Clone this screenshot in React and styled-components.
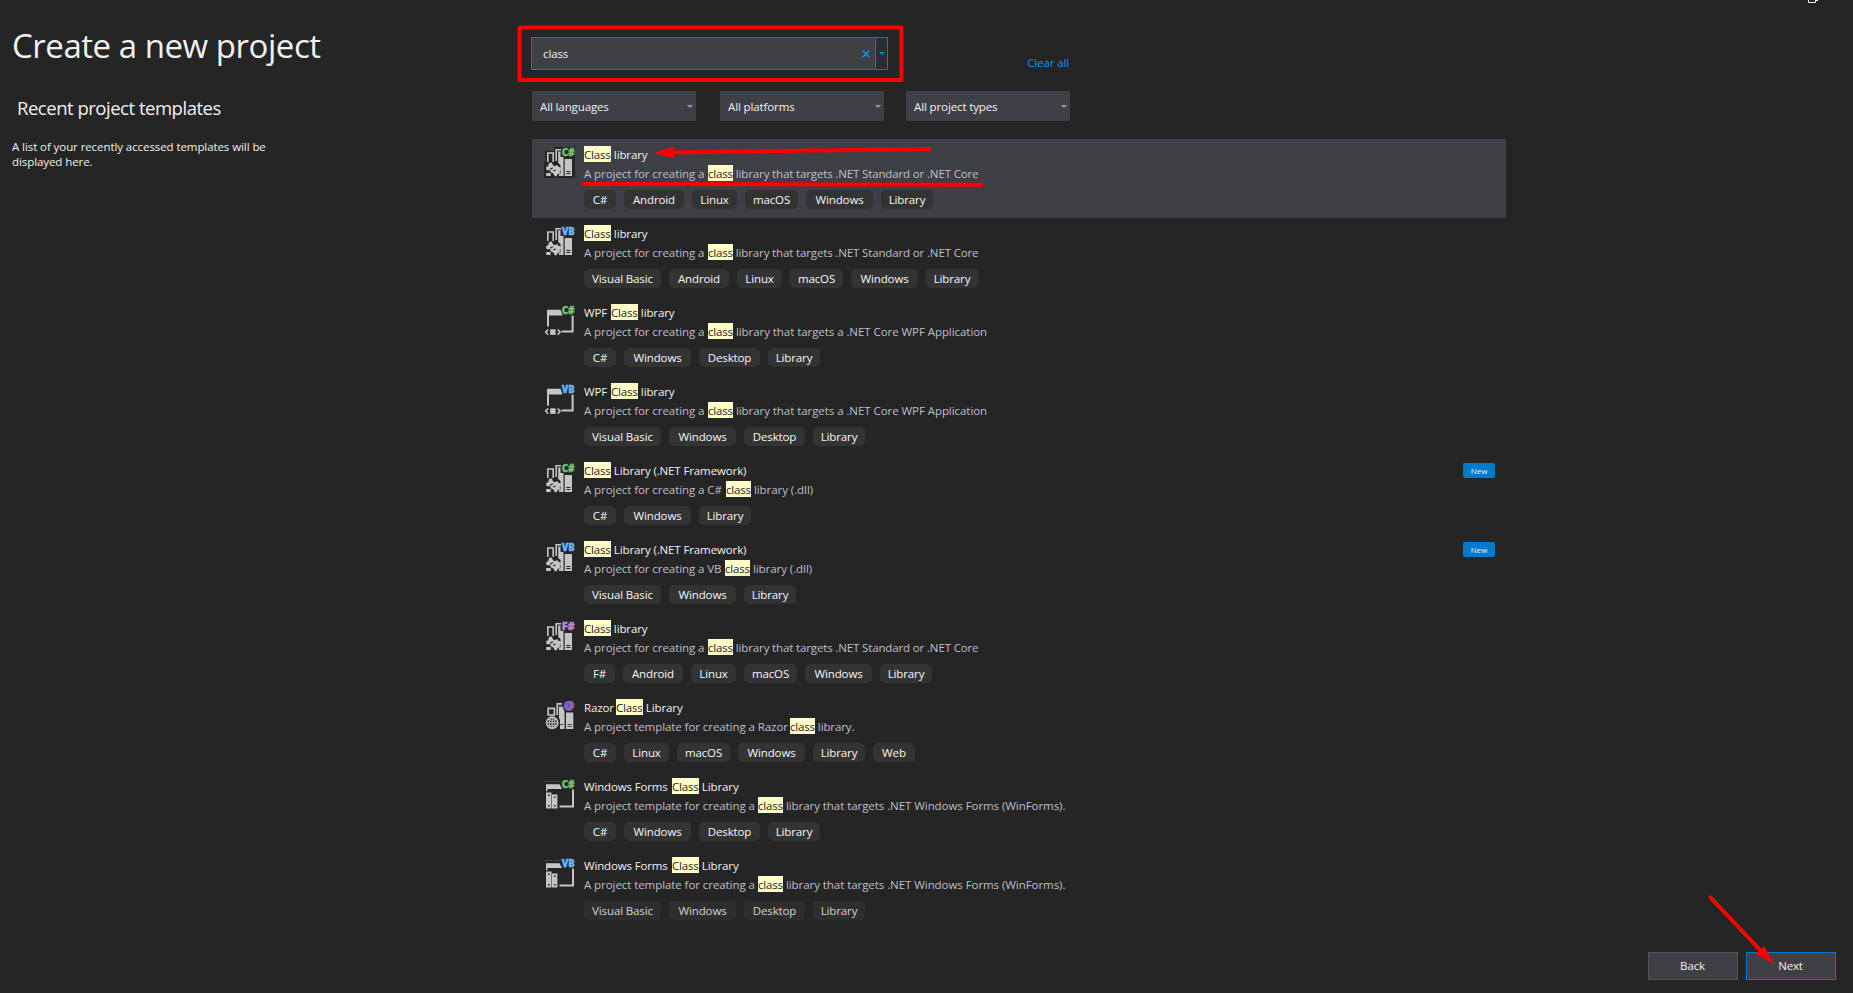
import React from 'react';
import styled, { createGlobalStyle } from 'styled-components';

const GlobalStyle = createGlobalStyle`
  * { box-sizing: border-box; }
  body {
    margin: 0;
    background: #252526;
    color: #f1f1f1;
    font-family: 'Open Sans', 'Noto Sans', sans-serif;
    font-size: 11.5px;
    letter-spacing: -0.12px;
  }
`;

const Page = styled.main`
  position: relative;
  display: grid;
  grid-template-columns: 531px 1fr;
  grid-template-rows: 1fr auto;
  width: 1853px;
  height: 993px;
  overflow: hidden;
`;

const Sidebar = styled.aside`
  padding: 24px 0 0 12px;
`;

const Heading = styled.h1`
  margin: 0;
  font-size: 33px;
  font-weight: 400;
  line-height: 44px;
  letter-spacing: -0.46px;
`;

const SubHeading = styled.h2`
  margin: 28px 0 0 5px;
  font-size: 18.5px;
  font-weight: 400;
  line-height: 24px;
  letter-spacing: -0.48px;
`;

const Hint = styled.p`
  width: 270px;
  margin: 19px 0 0;
  line-height: 15px;
  letter-spacing: -0.08px;
`;

const Content = styled.section`
  width: 975px;
  padding-top: 37px;
`;

const SearchRow = styled.div`
  display: flex;
  justify-content: space-between;
  width: 538px;
`;

const SearchBox = styled.div`
  display: flex;
  width: 357px;
  height: 33px;
  border: 1px solid #007acc;
  background: #3f3f46;
`;

const SearchText = styled.div`
  flex: 1;
  padding-left: 11px;
  line-height: 31px;
`;

const IconButton = styled.button`
  display: flex;
  align-items: center;
  justify-content: center;
  width: ${(p) => p.$width}px;
  padding: 0;
  border: 0;
  border-left: ${(p) => (p.$divided ? '1px solid #007acc' : '0')};
  background: ${(p) => (p.$divided ? '#2d2d30' : 'transparent')};
`;

const ClearLink = styled.a`
  padding-top: 18px;
  color: #0097fb;
  line-height: 16px;
`;

const Filters = styled.div`
  display: flex;
  gap: 22px;
  margin: 20px 0 18px 1px;
`;

const Select = styled.div`
  display: flex;
  align-items: center;
  justify-content: space-between;
  width: 164px;
  height: 30px;
  margin-right: ${(p) => p.$trail || 0}px;
  padding: 0 3px 0 8px;
  background: #3f3f46;
`;

const List = styled.ul`
  width: 974px;
  margin: 0 0 0 1px;
  padding: 0;
  list-style: none;
`;

const Item = styled.li`
  display: flex;
  height: 79px;
  padding: 7px 11px 0 12px;
  background: ${(p) => (p.$selected ? '#3f3f46' : 'transparent')};
`;

const ItemIcon = styled.svg`
  flex: none;
  width: 32px;
  height: 32px;
  margin: 1px 8px 0 0;
  overflow: visible;
`;

const Glyph = styled.text`
  font-size: ${(p) => p.$size || 10}px;
  font-weight: 800;
  letter-spacing: 0;
  stroke: ${(p) => p.fill};
  stroke-width: 0.35px;
`;

const ItemBody = styled.div`
  flex: 1;
`;

const Line = styled.div`
  display: flex;
  height: 16px;
  margin-bottom: 3px;
  color: ${(p) => (p.$muted ? '#bfbfc9' : '#f1f1f1')};
  line-height: 17px;
  white-space: pre;
`;

const Segment = styled.span`
  width: ${(p) => (p.$width ? `${p.$width}px` : 'auto')};
  letter-spacing: ${(p) => p.$tracking}px;
`;

const Mark = styled.mark`
  width: ${(p) => p.$width}px;
  background: #fffdc8;
  color: #252526;
  letter-spacing: -0.2px;
`;

const Tags = styled.div`
  display: flex;
  gap: 8px;
  margin-top: 9px;
`;

const Tag = styled.span`
  width: ${(p) => p.$width}px;
  height: 19px;
  border-radius: 5px;
  background: ${(p) => (p.$faded ? '#2e2e2f' : '#333334')};
  color: ${(p) => (p.$faded ? '#d2d2d2' : '#f6f6f6')};
  line-height: 19px;
  text-align: center;
  white-space: nowrap;
`;

const Badge = styled.span`
  width: 32px;
  height: 15px;
  margin-top: 1px;
  border-radius: 2px;
  background: #007acc;
  font-size: 8px;
  letter-spacing: 0;
  line-height: 16px;
  text-align: center;
`;

const Footer = styled.footer`
  grid-column: 1 / -1;
  display: flex;
  justify-content: flex-end;
  gap: 8px;
  padding: 0 17px 13px 0;
`;

const Button = styled.button`
  width: 90px;
  height: 28px;
  padding: 0 1px 2px 0;
  border: 1px solid ${(p) => (p.$primary ? '#007acc' : '#555555')};
  background: #3f3f46;
  color: #f1f1f1;
  font: inherit;
  letter-spacing: -0.15px;
`;

const Annotations = styled.svg`
  position: absolute;
  inset: 0;
  pointer-events: none;
`;

const Caret = ({ color = '#999999' }) => (
  <svg width="6" height="3" viewBox="0 0 6 3"><path d="M0 0h6L3 3z" fill={color} /></svg>
);

const LANG = {
  'C#': '#73c374',
  VB: '#68b6f7',
  'F#': '#b887d6',
};

function LibraryIcon({ lang }) {
  return (
    <ItemIcon viewBox="0 0 32 32">
      <path d="M1 4h9V0h21v31H0V15h1z" fill="#252526" />
      <path d="M3.800 15V6h5.400v9M12.200 14V2.700H17" fill="none" stroke="#c5c5c5" strokeWidth="1.600" />
      <path d="M14.200 4.500h2.300V10H19.500V29H16.500V18L14.200 16z" fill="#c5c5c5" />
      <path d="M20.700 12h7.300V29H20.700z" fill="#c5c5c5" />
      <path d="M22.300 24.500h4.200M22.300 26.500h4.200" stroke="#252526" strokeWidth="1" />
      <path d="M2.200 20l2-.8.8-3.200 2.800-.4 1.200 2.600 1.600 1 2.800-1.200 1 1.800 2.200.6.400 2.400-1.400 1.500.6 2-2.300.4-1.400 2.500h-1.600l-1.800-3-2.200-.8-.8-2.400-2.200.6-1.700-1z" fill="#c5c5c5" />
      <path d="M2.200 26h4.500v3H2.200zM15 26.500h1.800V29H15z" fill="#c5c5c5" />
      <path d="M6.200 22.300l2.600-1.600M9.200 24l2.400-1" stroke="#252526" strokeWidth="1.300" />
      <Glyph x="17.700" y="9.200" fill={LANG[lang]} textLength="13" lengthAdjust="spacingAndGlyphs">{lang}</Glyph>
    </ItemIcon>
  );
}

function WpfIcon({ lang }) {
  return (
    <ItemIcon viewBox="0 0 32 32">
      <path d="M3 4.700h13.500L18.500 10.500H5V21.500H3z" fill="#c5c5c5" />
      <path d="M28.600 10.500v16H17.500" fill="none" stroke="#c5c5c5" strokeWidth="2" />
      <path d="M4.200 24.500L1.700 27.100l2.500 2.600M13.600 24.500l2.500 2.600-2.500 2.600" fill="none" stroke="#c5c5c5" strokeWidth="1.600" />
      <path d="M6.200 24.300h5.400v5.600H6.200z" fill="#c5c5c5" />
      <Glyph x="17.700" y="9" fill={LANG[lang]} textLength="13" lengthAdjust="spacingAndGlyphs">{lang}</Glyph>
    </ItemIcon>
  );
}

function WinFormsIcon({ lang }) {
  return (
    <ItemIcon viewBox="0 0 32 32">
      <path d="M0 2.500h17" stroke="#444446" strokeWidth="1" />
      <path d="M2 5.300h13.500L18 10H3.500V12.300H2z" fill="#c5c5c5" />
      <path d="M29 10.500v17H15.500" fill="none" stroke="#c5c5c5" strokeWidth="2" />
      <path d="M2 13.500h5.500V29.500H2zM8 15.500h5.400V29.500H8z" fill="#c5c5c5" />
      <path d="M4 15.500h1.600v1.600H4zM4 26h1.600v1.600H4zM10 17.500h1.600v1.600H10zM10 26h1.600v1.600H10z" fill="#252526" />
      <Glyph x="17.700" y="9" fill={LANG[lang]} textLength="13" lengthAdjust="spacingAndGlyphs">{lang}</Glyph>
    </ItemIcon>
  );
}

function RazorIcon() {
  return (
    <ItemIcon viewBox="0 0 32 32">
      <path d="M4.200 8.400h6.200v6.600H4.200zM13.300 15V3.800H18" fill="none" stroke="#c5c5c5" strokeWidth="1.700" />
      <path d="M15 6.500h3.400l2.200 5V29H16V20l-1-2z" fill="#c5c5c5" />
      <path d="M22 12.500h7.300V29H22z" fill="#c5c5c5" />
      <path d="M15.500 24.500h4M23.500 24.500h4.300M23.500 26.500h4.300" stroke="#4a4a4b" strokeWidth="1" />
      <circle cx="8.200" cy="22.700" r="5.600" fill="none" stroke="#c5c5c5" strokeWidth="1.600" />
      <path d="M8.200 17v11.500M2.500 22.700h11.400M4 19.500q4.200 2 8.400 0M4 26q4.200-2 8.400 0" fill="none" stroke="#c5c5c5" />
      <ellipse cx="8.200" cy="22.700" rx="2.800" ry="5.500" fill="none" stroke="#c5c5c5" />
      <Glyph $size={12} x="19.500" y="9.800" fill="#9467d0" textLength="11" lengthAdjust="spacingAndGlyphs">@</Glyph>
    </ItemIcon>
  );
}

const ICONS = { library: LibraryIcon, wpf: WpfIcon, winforms: WinFormsIcon, razor: RazorIcon };

const TAG_WIDTH = {
  'C#': 32, 'F#': 31, 'Visual Basic': 77, Android: 60, Linux: 45, macOS: 53,
  Windows: 67, Library: 52, Desktop: 61, Web: 42,
};

// Each text is [before, width of before, highlighted word, after, tracking of after].
const CREATING = ['A project for creating a ', 124, 'class'];
const ALL_PLATFORMS = ['Android', 'Linux', 'macOS', 'Windows', 'Library'];
const STANDARD = [...CREATING, ' library that targets .NET Standard or .NET Core', -0.14];
const WPF = [...CREATING, ' library that targets a .NET Core WPF Application', -0.06];
const WINFORMS = ['A project template for creating a ', 174, 'class', ' library that targets .NET Windows Forms (WinForms).', -0.06];

const TEMPLATES = [
  { icon: 'library', lang: 'C#', title: ['', 0, 'Class', ' library'], text: STANDARD, tags: ['C#', ...ALL_PLATFORMS], selected: true },
  { icon: 'library', lang: 'VB', title: ['', 0, 'Class', ' library'], text: STANDARD, tags: ['Visual Basic', ...ALL_PLATFORMS] },
  { icon: 'wpf', lang: 'C#', title: ['WPF ', 27, 'Class', ' library'], text: WPF, tags: ['C#', 'Windows', 'Desktop', 'Library'] },
  { icon: 'wpf', lang: 'VB', title: ['WPF ', 27, 'Class', ' library'], text: WPF, tags: ['Visual Basic', 'Windows', 'Desktop', 'Library'] },
  { icon: 'library', lang: 'C#', title: ['', 0, 'Class', ' Library (.NET Framework)'], text: ['A project for creating a C# ', 142, 'class', ' library (.dll)', -0.06], tags: ['C#', 'Windows', 'Library'], isNew: true },
  { icon: 'library', lang: 'VB', title: ['', 0, 'Class', ' Library (.NET Framework)'], text: ['A project for creating a VB ', 141, 'class', ' library (.dll)', -0.06], tags: ['Visual Basic', 'Windows', 'Library'], isNew: true },
  { icon: 'library', lang: 'F#', title: ['', 0, 'Class', ' library'], text: STANDARD, tags: ['F#', ...ALL_PLATFORMS] },
  { icon: 'razor', title: ['Razor ', 32, 'Class', ' Library'], text: ['A project template for creating a Razor ', 206, 'class', ' library.'], tags: ['C#', 'Linux', 'macOS', 'Windows', 'Library', 'Web'] },
  { icon: 'winforms', lang: 'C#', title: ['Windows Forms ', 88, 'Class', ' Library'], text: WINFORMS, tags: ['C#', 'Windows', 'Desktop', 'Library'] },
  { icon: 'winforms', lang: 'VB', title: ['Windows Forms ', 88, 'Class', ' Library'], text: WINFORMS, tags: ['Visual Basic', 'Windows', 'Desktop', 'Library'], faded: true },
];

function Highlighted({ parts, muted }) {
  const [before, width, word, after, tracking = -0.12] = parts;
  return (
    <Line $muted={muted}>
      {before && <Segment $width={width} $tracking={muted ? -0.07 : -0.15}>{before}</Segment>}
      <Mark $width={muted ? 25 : 27}>{word}</Mark>
      <Segment $tracking={tracking}>{after}</Segment>
    </Line>
  );
}

function Template({ item }) {
  const Icon = ICONS[item.icon];
  return (
    <Item $selected={item.selected}>
      <Icon lang={item.lang} />
      <ItemBody>
        <Highlighted parts={item.title} />
        <Highlighted parts={item.text} muted />
        <Tags>
          {item.tags.map((tag) => (
            <Tag key={tag} $width={TAG_WIDTH[tag]} $faded={item.faded}>{tag}</Tag>
          ))}
        </Tags>
      </ItemBody>
      {item.isNew && <Badge>New</Badge>}
    </Item>
  );
}

export default function App() {
  return (
    <Page>
      <GlobalStyle />
      <Sidebar>
        <Heading>Create a new project</Heading>
        <SubHeading>Recent project templates</SubHeading>
        <Hint>A list of your recently accessed templates will be displayed here.</Hint>
      </Sidebar>
      <Content>
        <SearchRow>
          <SearchBox>
            <SearchText>class</SearchText>
            <IconButton $width={18} aria-label="Clear search">
              <svg width="8" height="8" viewBox="0 0 8 8">
                <path d="M.7.7l6.600 6.600M7.300.7L.7 7.300" stroke="#0097fb" strokeWidth="1.500" />
              </svg>
            </IconButton>
            <IconButton $width={12} $divided aria-label="Search history"><Caret color="#0088dd" /></IconButton>
          </SearchBox>
          <ClearLink>Clear all</ClearLink>
        </SearchRow>
        <Filters>
          <Select $trail={2}>All languages<Caret /></Select>
          <Select>All platforms<Caret /></Select>
          <Select>All project types<Caret /></Select>
        </Filters>
        <List>
          {TEMPLATES.map((item, index) => <Template key={index} item={item} />)}
        </List>
      </Content>
      <Footer>
        <Button>Back</Button>
        <Button $primary>Next</Button>
      </Footer>
      <Annotations width="1853" height="993" viewBox="0 0 1853 993">
        <path d="M1808.500 0v2.500h7V0M1815 .5h3" fill="none" stroke="#f1f1f1" />
        <g fill="none" stroke="#ff0000" strokeWidth="4" strokeLinecap="round" strokeLinejoin="round">
          <path d="M519.500 27.500h382v52.500h-382z" />
          <path d="M929.500 149L672 152.500" />
          <path d="M583 184L981.500 184.800" />
          <path d="M1710.500 897.500L1761 951" />
        </g>
        <path d="M654 153l19.500-6.500v12zM1773.500 964l-18-10.500 9-7z" fill="#ff0000" />
      </Annotations>
    </Page>
  );
}
